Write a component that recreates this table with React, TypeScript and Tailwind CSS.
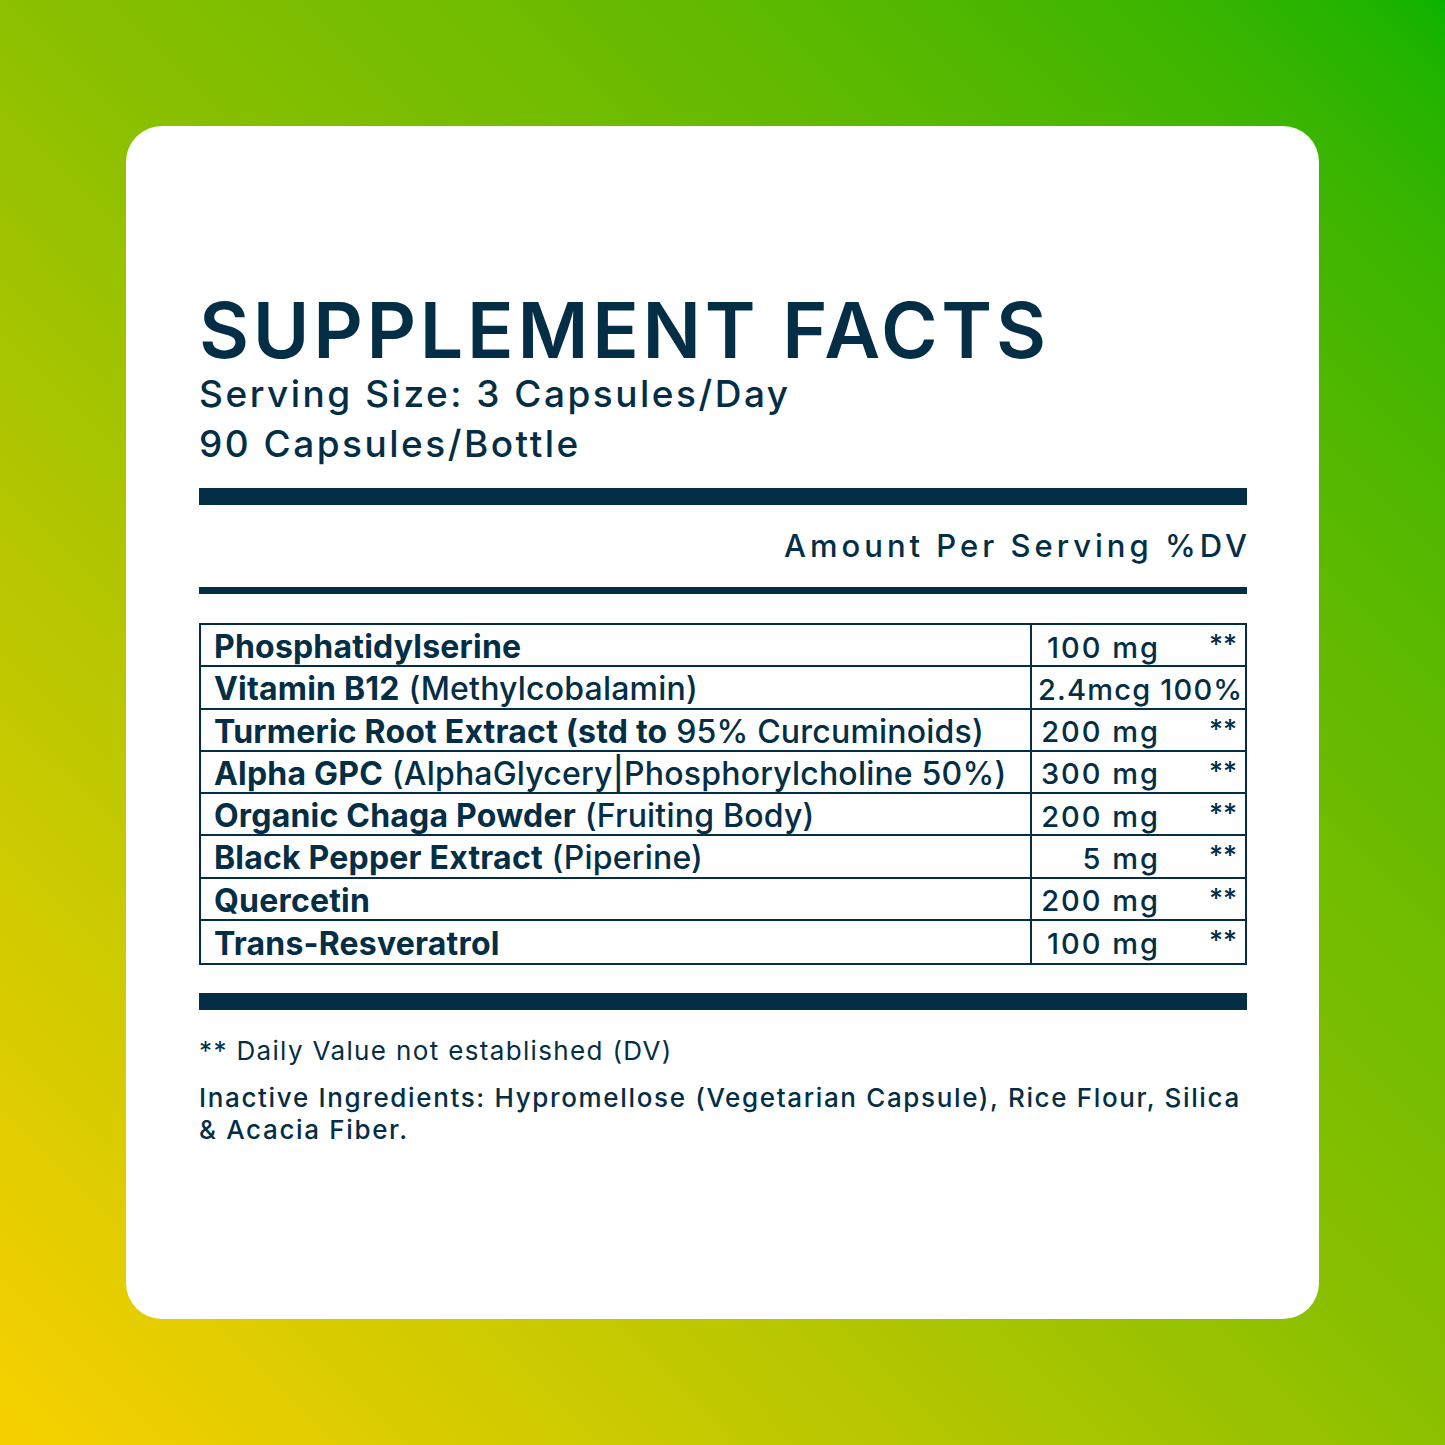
import React from "react";

const rows = [
  { name: "Phosphatidylserine", sub: "", amount: "100 mg", dv: "**" },
  { name: "Vitamin B12", sub: " (Methylcobalamin)", amount: "2.4mcg 100%", dv: "" },
  { name: "Turmeric Root Extract (std to", sub: " 95% Curcuminoids)", amount: "200 mg", dv: "**" },
  { name: "Alpha GPC", sub: " (AlphaGlycery|Phosphorylcholine 50%)", amount: "300 mg", dv: "**" },
  { name: "Organic Chaga Powder", sub: " (Fruiting Body)", amount: "200 mg", dv: "**" },
  { name: "Black Pepper Extract", sub: " (Piperine)", amount: "5 mg", dv: "**" },
  { name: "Quercetin", sub: "", amount: "200 mg", dv: "**" },
  { name: "Trans-Resveratrol", sub: "", amount: "100 mg", dv: "**" },
];

export default function App() {
  return (
    <div className="w-[1445px] h-[1445px] bg-gradient-to-tr from-[#f8d000] via-[#8cc000] to-[#08b200] p-[126px] font-['Inter',sans-serif] text-[#032e45]">
      <div className="w-full h-full bg-white rounded-[36px] pl-[73px] pr-[72px] pt-[165.5px]">
        <h1 className="text-[77px] leading-none font-semibold tracking-[3.7px]">SUPPLEMENT FACTS</h1>
        <div className="text-[37px] leading-[50px] font-medium tracking-[2.5px]">
          <div>Serving Size: 3 Capsules/Day</div>
          <div>90 Capsules/Bottle</div>
        </div>
        <div className="mt-[19.5px] h-[17px] bg-[#032e45]" />
        <div className="mt-[18.5px] -mr-[4px] text-right text-[31px] leading-[44px] font-medium tracking-[4px]">
          Amount Per Serving %DV
        </div>
        <div className="mt-[19.5px] h-[7px] bg-[#032e45]" />
        <div className="mt-[29px] border-2 border-[#032e45]">
          {rows.map((r, i) => (
            <div
              key={r.name}
              className={`grid grid-cols-[829px_1fr] h-[42.25px] ${i < rows.length - 1 ? "border-b-2 border-[#032e45]" : ""}`}
            >
              <div className="pl-[13px] pt-[4px] flex items-center whitespace-nowrap text-[32px] leading-none tracking-[0.2px]">
                <span className="font-bold">{r.name}</span>
                {r.sub && <span className="font-medium whitespace-pre">{r.sub}</span>}
              </div>
              <div className="border-l-2 border-[#032e45] flex items-center pt-[4px] pl-[8px] pr-[8px] font-medium whitespace-nowrap text-[29px] leading-none">
                {r.dv ? (
                  <>
                    <span className="w-[120px] text-right tracking-[2px]">{r.amount}</span>
                    <span className="ml-auto self-start mt-[2px] text-[27px] leading-none">{r.dv}</span>
                  </>
                ) : (
                  <span className="-ml-[2px] tracking-[1.2px]">{r.amount}</span>
                )}
              </div>
            </div>
          ))}
        </div>
        <div className="mt-[28px] h-[17px] bg-[#032e45]" />
        <p className="mt-[24px] text-[26px] leading-[34px] tracking-[1.35px]">** Daily Value not established (DV)</p>
        <p className="mt-[14px] text-[26px] leading-[32px] font-medium tracking-[1.65px]">
          Inactive Ingredients: Hypromellose (Vegetarian Capsule), Rice Flour, Silica &amp; Acacia Fiber.
        </p>
      </div>
    </div>
  );
}
